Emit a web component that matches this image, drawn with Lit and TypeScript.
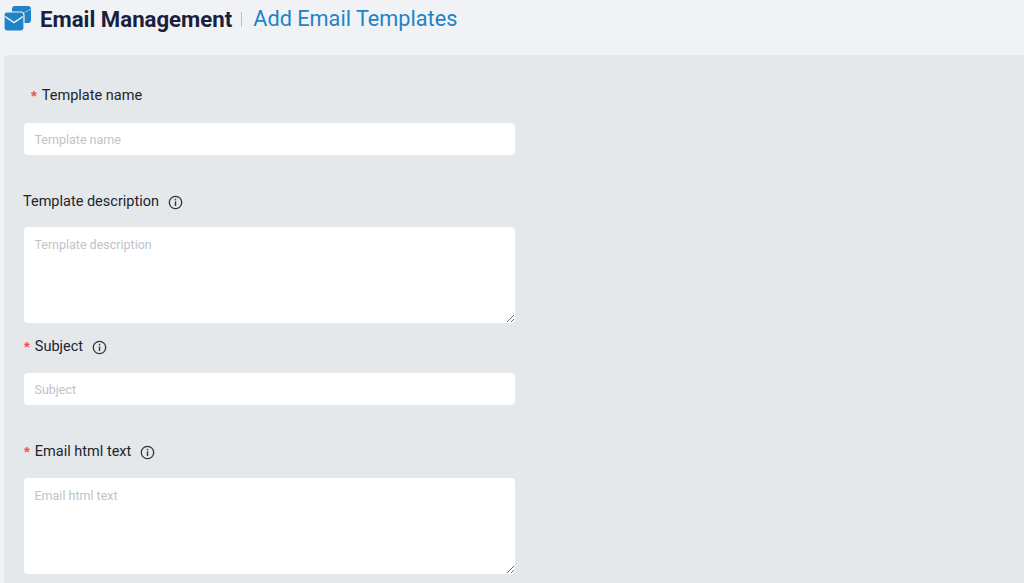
import { LitElement, html, css } from "lit";
import { customElement } from "lit/decorators.js";

const info = html`<svg class="info" viewBox="0 0 14 14" width="15" height="15" aria-hidden="true"><circle cx="7" cy="7" r="5.8" fill="none" stroke="#333" stroke-width="1.2"/><rect x="6.35" y="6" width="1.3" height="4.2" fill="#333"/><rect x="6.35" y="3.6" width="1.3" height="1.4" fill="#333"/></svg>`;

@customElement("app-root")
export class AppRoot extends LitElement {
  static styles = css`
    :host { display: block; height: 583px; overflow: hidden; background: #f0f2f6; font-family: Roboto, "Noto Sans", sans-serif; }
    .head { height: 55px; box-sizing: border-box; padding: 5px 0 0 4px; display: flex; align-items: flex-start; }
    .logo { width: 28px; height: 26px; margin-right: 8px; flex: none; }
    .title { font-size: 22.2px; font-weight: 700; line-height: 28px; color: #1a1f3d; white-space: nowrap; }
    .sep { width: 1px; height: 15px; background: #b9c2cc; margin: 7px 11px 0 9px; flex: none; }
    .sub { font-size: 21.7px; line-height: 28px; color: #1f83c6; white-space: nowrap; }
    .card { margin-left: 4px; height: 528px; background: #e4e8eb; border-top-left-radius: 5px; padding: 0 0 0 20px; box-sizing: border-box; display: flex; flex-direction: column; align-items: flex-start; }
    label { display: flex; align-items: center; font-size: 14.5px; line-height: 20px; color: #20242c; white-space: nowrap; }
    .req { color: #ff4d4f; font-size: 15px; font-weight: 700; margin-right: 5px; font-family: "Liberation Sans", sans-serif; }
    .info { margin-left: 9px; flex: none; }
    input, textarea { display: block; width: 491px; box-sizing: border-box; border: 0; border-radius: 4px; background: #fff; outline: 0; margin: 0; padding: 0 10.5px; font: 12.5px/20px Roboto, "Noto Sans", sans-serif; color: #333; }
    input { height: 32px; }
    textarea { height: 96px; padding-top: 8px; }
    ::placeholder { color: #c0c3c8; opacity: 1; }
    .l1 { margin: 31px 0 17px 7px; }
    .l2 { margin: 0 0 15px -1px; }
    .l3 { margin: 0 0 16px 0; }
    .l4 { margin: 0 0 16px 0; }
    .gap1 { height: 37px; } .gap2 { height: 14px; } .gap3 { height: 37px; }
  `;

  render() {
    return html`
      <div class="head">
        <svg class="logo" viewBox="0 0 28 26" aria-hidden="true">
          <rect x="8" y="1" width="19" height="17" rx="3" fill="#1f83c6"/>
          <path d="M20.500 7.500 27 4" fill="none" stroke="#8fc2e4" stroke-width="1"/>
          <rect x="0" y="7" width="20" height="19" rx="3" fill="#1f83c6" stroke="#f0f2f6" stroke-width="1.2"/>
          <path d="M1 11.500 10 17.500 19 11.500" fill="none" stroke="#f0f2f6" stroke-width="1.500"/>
        </svg>
        <span class="title">Email Management</span>
        <span class="sep"></span>
        <span class="sub">Add Email Templates</span>
      </div>
      <div class="card">
        <label class="l1"><span class="req">*</span>Template name</label>
        <input placeholder="Template name" />
        <div class="gap1"></div>
        <label class="l2">Template description${info}</label>
        <textarea placeholder="Template description"></textarea>
        <div class="gap2"></div>
        <label class="l3"><span class="req">*</span>Subject${info}</label>
        <input placeholder="Subject" />
        <div class="gap3"></div>
        <label class="l4"><span class="req">*</span>Email html text${info}</label>
        <textarea placeholder="Email html text"></textarea>
      </div>
    `;
  }
}
